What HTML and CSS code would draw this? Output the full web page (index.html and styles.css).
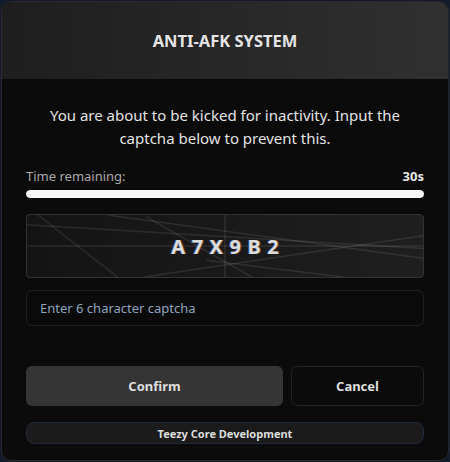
FILE: index.html
```html
<!DOCTYPE html>
<html>
<head>
<meta charset="utf-8">
<link rel="stylesheet" href="styles.css">
</head>
<body>
<div class="card">
  <div class="header"><h1 class="title">ANTI-AFK SYSTEM</h1></div>
  <div class="content">
    <p class="message">You are about to be kicked for inactivity. Input the captcha below to prevent this.</p>
    <div class="timer">
      <div class="timer-row"><span class="timer-label">Time remaining:</span><span class="timer-value">30s</span></div>
      <div class="bar"><div class="bar-fill" style="width:100%"></div></div>
    </div>
    <div class="captcha">
      <svg class="captcha-lines" viewBox="0 0 398 63" preserveAspectRatio="none">
        <line x1="0" y1="31.5" x2="398" y2="31.5"/>
        <line x1="199" y1="0" x2="199" y2="63"/>
        <line x1="11" y1="0" x2="91" y2="63"/>
        <line x1="0" y1="10" x2="398" y2="34"/>
        <line x1="81" y1="0" x2="398" y2="44"/>
        <line x1="117" y1="63" x2="398" y2="21"/>
        <line x1="120" y1="2" x2="226" y2="63"/>
        <line x1="180" y1="46" x2="317" y2="63"/>
      </svg>
      <span class="captcha-text">A7X9B2</span>
    </div>
    <input class="input" type="text" placeholder="Enter 6 character captcha">
    <div class="actions">
      <button class="btn btn-confirm">Confirm</button>
      <button class="btn btn-cancel">Cancel</button>
    </div>
    <div class="footer">Teezy Core Development</div>
  </div>
</div>
</body>
</html>
```
FILE: styles.css
```css
* { box-sizing: border-box; }
html, body { margin: 0; height: 100%; }
body {
  background: #121a2c;
  padding: 1px;
  font-family: "Noto Sans", "Open Sans", sans-serif;
  color: #e0e0e0;
}
.card {
  width: 448px;
  height: 460px;
  background: #0b0b0b;
  border: 1px solid #2a2a2a;
  border-radius: 10px;
  overflow: hidden;
  display: flex;
  flex-direction: column;
}
.header {
  height: 77px;
  background: linear-gradient(90deg, #1e1e1e, #303030);
  display: flex;
  align-items: center;
  justify-content: center;
}
.title {
  margin: 0;
  font-size: 16.5px;
  font-weight: 700;
  color: #e4e4e4;
}
.content {
  padding: 25px 24px 0 24px;
  display: flex;
  flex-direction: column;
}
.message {
  margin: 0 10px;
  text-align: center;
  font-size: 15px;
  line-height: 23px;
  color: #e2e2e2;
}
.timer { margin-top: 17px; }
.timer-row {
  display: flex;
  justify-content: space-between;
  font-size: 13px;
  line-height: 18px;
}
.timer-label { color: #a8a8a8; }
.timer-value { color: #e6e6e6; font-weight: 700; }
.bar {
  margin-top: 5px;
  height: 8px;
  border-radius: 4px;
  background: #222;
  overflow: hidden;
}
.bar-fill { height: 100%; background: #f8f9fa; border-radius: 4px; }
.captcha {
  position: relative;
  margin-top: 16px;
  height: 64px;
  border: 1px solid #333;
  border-radius: 4px;
  background: linear-gradient(90deg, #141414, #1f1f1f);
  display: flex;
  align-items: center;
  justify-content: center;
  overflow: hidden;
}
.captcha-lines {
  position: absolute;
  inset: 0;
  width: 100%;
  height: 100%;
}
.captcha-lines line { stroke: rgba(255,255,255,0.09); stroke-width: 1.5; }
.captcha-text {
  position: relative;
  font-size: 20px;
  font-weight: 700;
  letter-spacing: 6.5px;
  margin-right: -6.5px;
  color: #dcdcdc;
  text-shadow: -1px 0 rgba(80,140,255,0.5), 1px 0 rgba(255,150,60,0.4);
}
.input {
  margin-top: 12px;
  height: 36px;
  border: 1px solid #1f1f1f;
  border-radius: 6px;
  background: #0b0b0b;
  padding: 0 13px;
  font-family: inherit;
  font-size: 13px;
  color: #ddd;
  outline: none;
}
.input::placeholder { color: #8fa2bb; }
.actions {
  margin-top: 40px;
  display: flex;
  gap: 8px;
}
.btn {
  height: 40px;
  border-radius: 6px;
  font-family: inherit;
  font-size: 13px;
  font-weight: 700;
  color: #dedede;
  cursor: pointer;
}
.btn-confirm {
  flex: 0 0 257px;
  background: #353535;
  border: none;
}
.btn-cancel {
  flex: 1;
  background: #0b0b0b;
  border: 1px solid #222;
}
.footer {
  margin-top: 16px;
  height: 22px;
  border: 1px solid #1e2a3c;
  border-radius: 8px;
  background: #1b1b1b;
  font-size: 11px;
  font-weight: 700;
  color: #dcdcdc;
  display: flex;
  align-items: center;
  justify-content: center;
}
```
